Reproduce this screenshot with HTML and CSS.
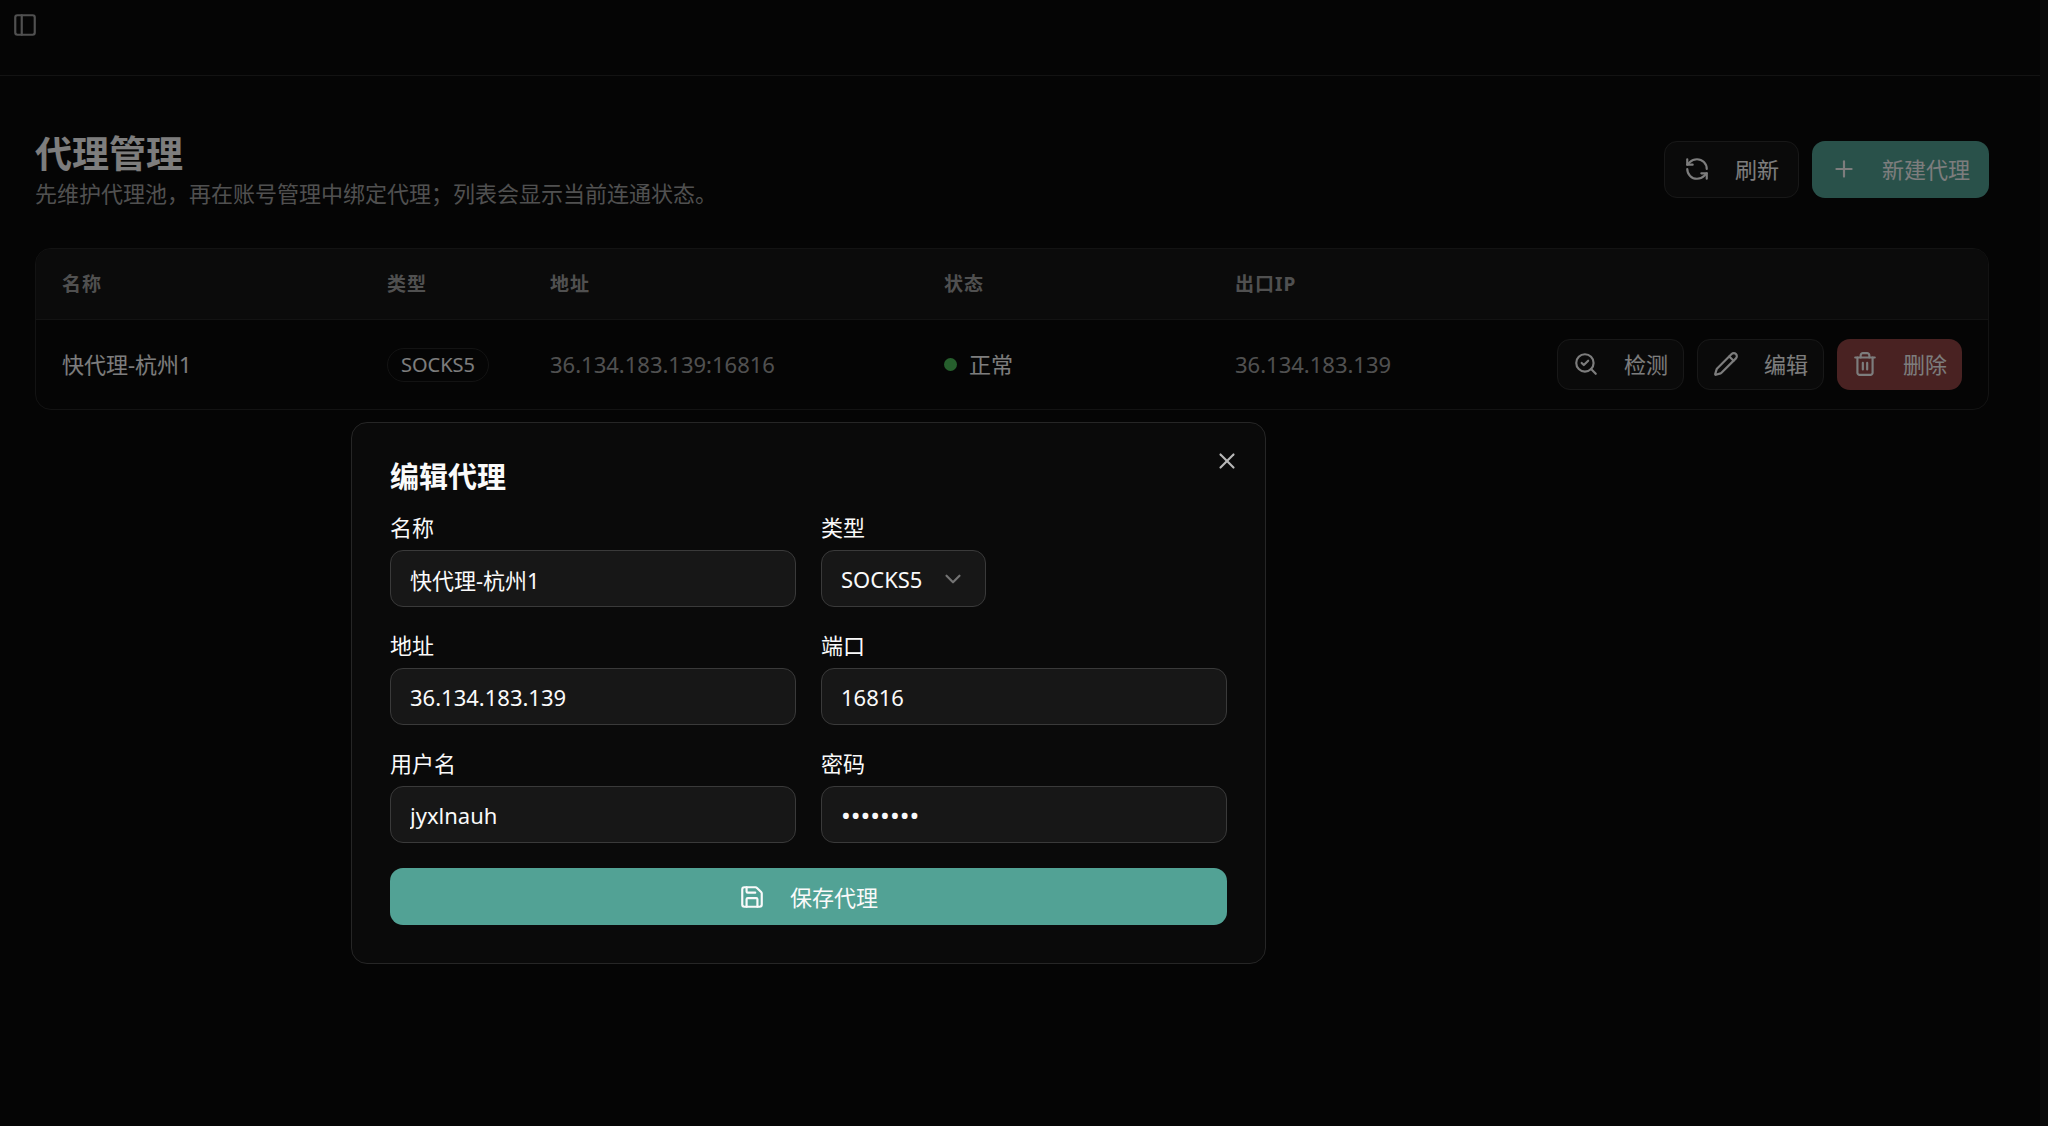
FILE: index.html
```html
<!DOCTYPE html>
<html lang="zh-CN">
<head>
    <meta charset="UTF-8">
    <meta name="viewport" content="width=device-width, initial-scale=1.0">
    <title>代理管理</title>
    <link rel="stylesheet" href="styles.css">
</head>
<body>
    <div class="app">
        <header class="topbar">
            <button type="button" class="sidebar-toggle" aria-label="切换侧边栏">
                <svg class="icon" viewBox="0 0 24 24"><rect width="18" height="18" x="3" y="3" rx="2"/><path d="M9 3v18"/></svg>
            </button>
        </header>

        <main class="content">
            <div class="page-header">
                <div>
                    <h1>代理管理</h1>
                    <p class="subtitle">先维护代理池，再在账号管理中绑定代理；列表会显示当前连通状态。</p>
                </div>
                <div class="actions">
                    <button type="button" class="btn btn-outline">
                        <svg class="icon" viewBox="0 0 24 24"><path d="M21 12a9 9 0 0 0-9-9 9.75 9.75 0 0 0-6.74 2.74L3 8"/><path d="M3 3v5h5"/><path d="M3 12a9 9 0 0 0 9 9 9.75 9.75 0 0 0 6.74-2.74L21 16"/><path d="M16 16h5v5"/></svg>
                        刷新
                    </button>
                    <button type="button" class="btn btn-primary">
                        <svg class="icon" viewBox="0 0 24 24"><path d="M5 12h14"/><path d="M12 5v14"/></svg>
                        新建代理
                    </button>
                </div>
            </div>

            <div class="table-card">
                <table class="proxy-table">
                    <thead>
                        <tr>
                            <th class="col-name">名称</th>
                            <th class="col-type">类型</th>
                            <th class="col-address">地址</th>
                            <th class="col-status">状态</th>
                            <th class="col-ip">出口IP</th>
                            <th></th>
                        </tr>
                    </thead>
                    <tbody>
                        <tr>
                            <td>快代理-杭州1</td>
                            <td><span class="badge">SOCKS5</span></td>
                            <td class="muted">36.134.183.139:16816</td>
                            <td><span class="status"><span class="status-dot"></span>正常</span></td>
                            <td class="muted">36.134.183.139</td>
                            <td>
                                <div class="row-actions">
                                    <button type="button" class="btn btn-sm btn-outline">
                                        <svg class="icon" viewBox="0 0 24 24"><path d="m8 11 2 2 4-4"/><circle cx="11" cy="11" r="8"/><path d="m21 21-4.3-4.3"/></svg>
                                        检测
                                    </button>
                                    <button type="button" class="btn btn-sm btn-outline">
                                        <svg class="icon" viewBox="0 0 24 24"><path d="M21.174 6.812a1 1 0 0 0-3.986-3.987L3.842 16.174a2 2 0 0 0-.5.83l-1.321 4.352a.5.5 0 0 0 .623.622l4.353-1.32a2 2 0 0 0 .83-.497z"/><path d="m15 5 4 4"/></svg>
                                        编辑
                                    </button>
                                    <button type="button" class="btn btn-sm btn-danger">
                                        <svg class="icon" viewBox="0 0 24 24"><path d="M3 6h18"/><path d="M19 6v14c0 1-1 2-2 2H7c-1 0-2-1-2-2V6"/><path d="M8 6V4c0-1 1-2 2-2h4c1 0 2 1 2 2v2"/><path d="M10 11v6"/><path d="M14 11v6"/></svg>
                                        删除
                                    </button>
                                </div>
                            </td>
                        </tr>
                    </tbody>
                </table>
            </div>
        </main>
    </div>

    <div class="overlay"></div>

    <div class="dialog" role="dialog" aria-modal="true" aria-labelledby="dialog-title">
        <h2 id="dialog-title">编辑代理</h2>
        <button type="button" class="dialog-close" aria-label="关闭">
            <svg class="icon" viewBox="0 0 24 24"><path d="M18 6 6 18"/><path d="m6 6 12 12"/></svg>
        </button>
        <form class="proxy-form">
            <div class="field">
                <label for="name">名称</label>
                <input type="text" id="name" value="快代理-杭州1">
            </div>
            <div class="field">
                <label for="type">类型</label>
                <div class="select-wrap">
                    <select id="type">
                        <option>SOCKS5</option>
                    </select>
                    <svg class="icon select-arrow" viewBox="0 0 24 24"><path d="m6 9 6 6 6-6"/></svg>
                </div>
            </div>
            <div class="field">
                <label for="host">地址</label>
                <input type="text" id="host" value="36.134.183.139">
            </div>
            <div class="field">
                <label for="port">端口</label>
                <input type="text" id="port" value="16816">
            </div>
            <div class="field">
                <label for="username">用户名</label>
                <input type="text" id="username" value="jyxlnauh">
            </div>
            <div class="field">
                <label for="password">密码</label>
                <input type="password" id="password" class="password-input" value="password">
            </div>
            <button type="submit" class="btn btn-primary btn-save">
                <svg class="icon" viewBox="0 0 24 24"><path d="M15.2 3a2 2 0 0 1 1.4.6l3.8 3.8a2 2 0 0 1 .6 1.4V19a2 2 0 0 1-2 2H5a2 2 0 0 1-2-2V5a2 2 0 0 1 2-2z"/><path d="M17 21v-7a1 1 0 0 0-1-1H8a1 1 0 0 0-1 1v7"/><path d="M7 3v4a1 1 0 0 0 1 1h7"/></svg>
                保存代理
            </button>
        </form>
    </div>
</body>
</html>
```
FILE: styles.css
```css
:root {
    --background: #0a0a0a;
    --card: #171717;
    --foreground: #fafafa;
    --muted: #a1a1a1;
    --border: #262626;
    --input-border: #3a3a3a;
    --primary: #52a295;
    --danger: #924444;
}

* {
    box-sizing: border-box;
}

body {
    margin: 0;
    min-height: 100vh;
    background: var(--background);
    color: var(--foreground);
    font-family: "Noto Sans", "Noto Sans CJK SC", sans-serif;
    font-size: 22px;
    line-height: 32px;
}

button,
input,
select {
    font: inherit;
    color: inherit;
}

button {
    cursor: pointer;
}

.icon {
    width: 26px;
    height: 26px;
    flex-shrink: 0;
    fill: none;
    stroke: currentColor;
    stroke-width: 2;
    stroke-linecap: round;
    stroke-linejoin: round;
}

.app {
    min-height: 100vh;
    margin-right: 8px;
}

.topbar {
    height: 76px;
    padding: 6px;
    border-bottom: 1px solid var(--border);
}

.sidebar-toggle {
    display: flex;
    align-items: center;
    justify-content: center;
    width: 38px;
    height: 38px;
    padding: 0;
    border: none;
    background: none;
    color: var(--muted);
}

.content {
    padding: 54px 51px 51px 35px;
}

.page-header {
    display: flex;
    align-items: center;
    justify-content: space-between;
    gap: 24px;
    margin-bottom: 40px;
}

h1 {
    margin: 0;
    font-size: 37px;
    line-height: 48px;
    font-weight: 700;
}

.subtitle {
    margin: 0;
    line-height: 30px;
    color: var(--muted);
}

.actions,
.row-actions {
    display: flex;
    justify-content: flex-end;
    gap: 13px;
}

.btn {
    display: inline-flex;
    align-items: center;
    justify-content: center;
    gap: 25px;
    height: 57px;
    padding: 0 19px;
    border: none;
    border-radius: 13px;
    white-space: nowrap;
}

.btn-sm {
    height: 51px;
    padding: 0 15px;
}

.btn-outline {
    background: #151515;
    border: 1px solid #303030;
}

.btn-primary {
    background: var(--primary);
}

.btn-danger {
    background: var(--danger);
}

.table-card {
    border: 1px solid var(--border);
    border-radius: 16px;
    overflow: hidden;
}

.proxy-table {
    width: 100%;
    border-collapse: collapse;
    text-align: left;
}

.proxy-table th {
    height: 70px;
    padding: 0 26px;
    background: var(--card);
    border-bottom: 1px solid var(--border);
    color: var(--muted);
    font-size: 19px;
    font-weight: 700;
    letter-spacing: 1px;
}

.proxy-table td {
    height: 90px;
    padding: 0 26px;
    white-space: nowrap;
}

.col-name {
    width: 325px;
}

.col-type {
    width: 163px;
}

.col-address {
    width: 394px;
}

.col-status {
    width: 291px;
}

.col-ip {
    width: 290px;
}

.proxy-table .muted {
    color: var(--muted);
}

.badge {
    display: inline-block;
    padding: 0 13px;
    border: 1px solid var(--border);
    border-radius: 17px;
    font-size: 20px;
}

.status {
    display: flex;
    align-items: center;
    gap: 12px;
}

.status-dot {
    width: 13px;
    height: 13px;
    border-radius: 50%;
    background: #4cbf5a;
}

.overlay {
    position: fixed;
    inset: 0 8px 0 0;
    background: rgba(0, 0, 0, 0.5);
}

/* The dialog floats above the dimmed page */
.dialog {
    position: fixed;
    top: 422px;
    left: 351px;
    width: 915px;
    max-width: 90vw;
    padding: 38px;
    background: var(--background);
    border: 1px solid var(--border);
    border-radius: 16px;
}

.dialog h2 {
    margin: 0 0 21px;
    font-size: 29px;
    line-height: 32px;
    font-weight: 700;
}

.dialog-close {
    position: absolute;
    top: 25px;
    right: 25px;
    display: flex;
    padding: 0;
    border: none;
    background: none;
    color: #b8b8b8;
}

.proxy-form {
    display: grid;
    grid-template-columns: 1fr 1fr;
    gap: 25px;
}

.field {
    display: flex;
    flex-direction: column;
    align-items: flex-start;
    gap: 10px;
    line-height: 26px;
}

.field input,
.field select {
    display: block;
    height: 57px;
    padding: 0 19px;
    background: var(--card);
    border: 1px solid var(--input-border);
    border-radius: 13px;
}

.field input {
    width: 100%;
}

.field .password-input {
    font-size: 26px;
}

.field select {
    appearance: none;
    padding-right: 62px;
}

.select-wrap {
    position: relative;
}

.select-arrow {
    position: absolute;
    top: 16px;
    right: 20px;
    color: #737373;
    pointer-events: none;
}

.btn-save {
    grid-column: 1 / -1;
}
```
